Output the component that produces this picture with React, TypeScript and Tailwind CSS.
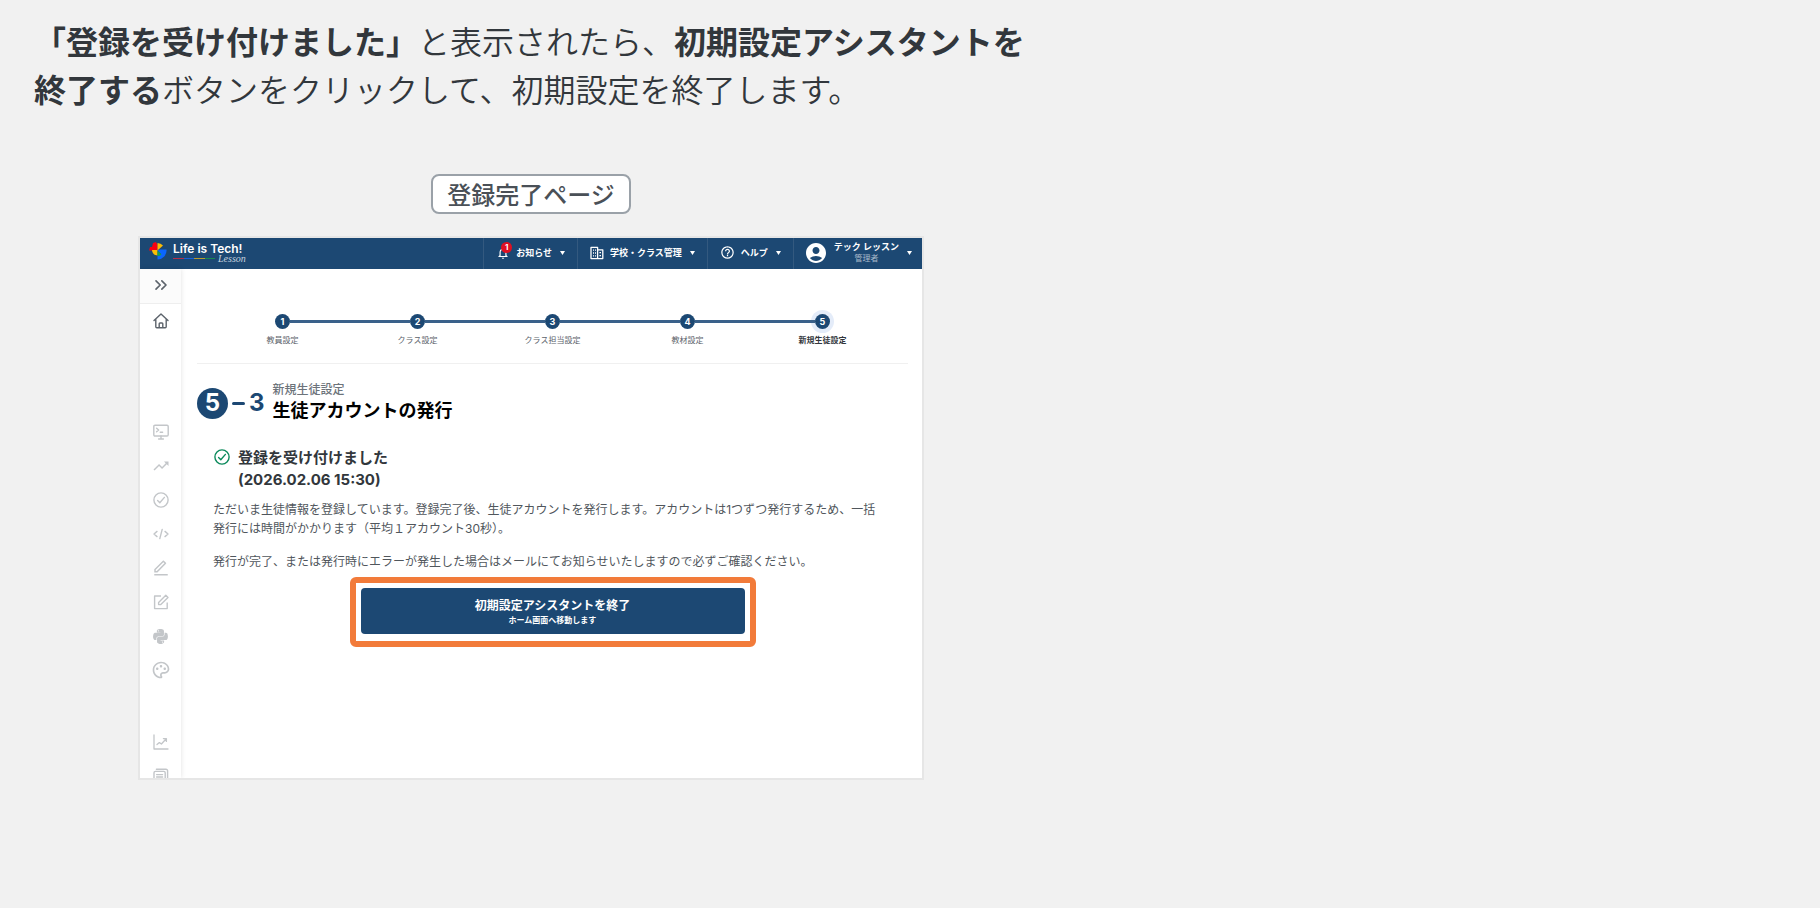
import type { ReactNode } from "react";
import { MdAccountCircle, MdHelpOutline, MdNotificationsNone, MdTrendingUp } from "react-icons/md";
import { RiEditLine, RiPaletteLine } from "react-icons/ri";
import { FaPython } from "react-icons/fa";
import { ChevronsRight } from "lucide-react";

const steps = ["教員設定", "クラス設定", "クラス担当設定", "教材設定", "新規生徒設定"];

function LogoMark() {
  return (
    <svg viewBox="0 0 36 36" className="size-[18px]" aria-hidden="true">
      <path d="M17 17H0L2 10H6L8 2L14 0L17 6Z" fill="#f80012" />
      <path d="M6 16H17V27A11 11 0 0 1 6 16Z" fill="#fbbc05" />
      <path d="M17 17V2A15 15 0 0 1 28 7Z" fill="#fbbc05" />
      <path d="M17 17L21 15H35A18 18 0 0 1 17 35V27A9 9 0 0 0 24 24Z" fill="#0a66ff" />
      <path d="M17 17L25 25A11 11 0 0 1 17 28Z" fill="#12a150" />
    </svg>
  );
}

function HomeIcon() {
  return (
    <svg viewBox="0 0 16 16" className="size-4" fill="none" stroke="currentColor" strokeWidth="1.4" strokeLinejoin="round" strokeLinecap="round">
      <path d="M1 7.6 8 1l7 6.6M2.8 6.2V13.7a1 1 0 0 0 1 1h8.4a1 1 0 0 0 1-1V6.2" />
      <path d="M6.2 14.4V10.8a.8.8 0 0 1 .8-.8h2a.8.8 0 0 1 .8.8v3.6" />
    </svg>
  );
}

function TerminalIcon() {
  return (
    <svg viewBox="0 0 16 16" className="size-4" fill="none" stroke="currentColor" strokeWidth="1.4" strokeLinejoin="round" strokeLinecap="round">
      <rect x="0.8" y="1.2" width="14.4" height="10.8" rx="1.2" />
      <path d="M3.6 4.2 5.6 6 3.6 7.8M7.2 8.2h2.4M8 12v2.8M5.6 15h4.8" />
    </svg>
  );
}

function CheckIcon() {
  return (
    <svg viewBox="0 0 16 16" className="size-4" fill="none" stroke="currentColor" strokeWidth="1.4" strokeLinejoin="round" strokeLinecap="round">
      <circle cx="8" cy="8" r="7.1" />
      <path d="M4.6 8.6 6.8 10.8 11.4 5.4" />
    </svg>
  );
}

function CodeIcon() {
  return (
    <svg viewBox="0 0 16 16" className="size-4" fill="none" stroke="currentColor" strokeWidth="1.4" strokeLinejoin="round" strokeLinecap="round">
      <path d="M4 5.4 1 8l3 2.6M12 5.4 15 8l-3 2.6M9.2 3.4 6.8 12.6" />
    </svg>
  );
}

function EditBoxIcon() {
  return (
    <svg viewBox="0 0 16 16" className="size-4" fill="none" stroke="currentColor" strokeWidth="1.4" strokeLinejoin="round">
      <path d="M8 2H1.6v12.6h12.6V8.4" />
      <path d="M5.6 10.6V8.4L12.8 1.2l2.2 2.2-7.2 7.2z" />
    </svg>
  );
}

function ChartIcon() {
  return (
    <svg viewBox="0 0 16 16" className="size-4" fill="none" stroke="currentColor" strokeWidth="1.3" strokeLinejoin="round" strokeLinecap="round">
      <path d="M1 1v14h14M4 10.6l2.4-2 2 1.4L13 5M10.4 4.6H13.4V7.4" />
    </svg>
  );
}

function PagesIcon() {
  return (
    <svg viewBox="0 0 16 16" className="size-4" fill="none" stroke="currentColor" strokeWidth="1.4" strokeLinejoin="round" strokeLinecap="round">
      <path d="M3.4 1.2H13a1.6 1.6 0 0 1 1.6 1.6v9" />
      <rect x="1" y="3.4" width="11.2" height="12" rx="1.4" />
      <path d="M3.6 6.6h6M3.6 9h6M3.6 11.4h3" />
    </svg>
  );
}

function SchoolIcon() {
  return (
    <svg viewBox="0 0 14 14" className="size-[14px]" fill="none" stroke="currentColor" strokeWidth="1.3" strokeLinejoin="round">
      <path d="M1 12.6V1.4h6.6v11.2zM7.6 3.8h5.2v8.8H7.6" />
      <path d="M3 4.2h1M5 4.2h1M3 7h1M5 7h1M3 9.8h1M5 9.8h1M9.4 6.6h1.6M9.4 9.6h1.6" />
    </svg>
  );
}

function Caret() {
  return (
    <svg viewBox="0 0 5 4" className="ml-[2px] h-1 w-[5px]" fill="currentColor" aria-hidden="true">
      <path d="M0 0h5L2.5 4z" />
    </svg>
  );
}

function NavButton({ icon, label }: { icon: ReactNode; label: string }) {
  return (
    <button type="button" className="flex items-center gap-[6px] border-l border-[#33597f] px-3 pb-[2px] text-[9px] font-bold">
      {icon}
      <span>{label}</span>
      <Caret />
    </button>
  );
}

function TopBar() {
  return (
    <header className="flex h-[31px] shrink-0 bg-[#1c4873] text-white">
      <a href="#" className="flex items-start gap-[6px] pt-1 pl-[9px]">
        <LogoMark />
        <span className="flex flex-col">
          <span className="text-[12px] leading-[13px] font-semibold">Life is Tech!</span>
          <span className="flex gap-[3px]">
            <span className="mt-[3px] flex h-px w-[42px]">
              <span className="flex-1 bg-[#b52f48]" />
              <span className="flex-1 bg-[#1760d8]" />
              <span className="flex-1 bg-[#b99a2c]" />
              <span className="flex-1 bg-[#178a52]" />
            </span>
            <span className="font-['Liberation_Serif',serif] text-[10px] leading-[7px] text-[#c5d2df] italic">Lesson</span>
          </span>
        </span>
      </a>
      <nav className="ml-auto flex">
        <NavButton
          label="お知らせ"
          icon={
            <span className="relative">
              <MdNotificationsNone className="size-[14px]" />
              <span className="absolute -top-1 left-[5px] flex size-[11px] items-center justify-center rounded-full bg-[#e01022] text-[8px] leading-none">
                1
              </span>
            </span>
          }
        />
        <NavButton label="学校・クラス管理" icon={<SchoolIcon />} />
        <NavButton label="ヘルプ" icon={<MdHelpOutline className="size-[15px]" />} />
        <button type="button" className="flex items-center gap-[6px] border-l border-[#33597f] px-[10px] pb-[2px]">
          <MdAccountCircle className="size-6" />
          <span className="flex flex-col items-center">
            <span className="text-[9px] leading-[12px] font-bold">テック レッスン</span>
            <span className="text-[8px] leading-[11px] text-[#a9b9ca]">管理者</span>
          </span>
          <Caret />
        </button>
      </nav>
    </header>
  );
}

function SideBar() {
  return (
    <aside className="flex w-[41px] shrink-0 flex-col items-center overflow-hidden text-[#c3c6c9] shadow-[0_0_5px_rgba(0,0,0,0.12)]">
      <button
        type="button"
        aria-label="メニューを開く"
        className="flex h-[35px] w-full shrink-0 items-center justify-center border-b border-[#eeeeee] bg-[#fbfbfb] pb-[2px] text-[#5c636b]"
      >
        <ChevronsRight className="size-5" strokeWidth={2} />
      </button>
      <a href="#" aria-label="ホーム" className="flex h-[34px] shrink-0 items-center text-[#5c636b]">
        <HomeIcon />
      </a>
      <ul className="mt-[77px] flex shrink-0 flex-col">
        {[
          <TerminalIcon />,
          <MdTrendingUp className="size-[18px]" />,
          <CheckIcon />,
          <CodeIcon />,
          <RiEditLine className="size-[18px]" />,
          <EditBoxIcon />,
          <FaPython className="size-[17px]" />,
          <RiPaletteLine className="size-5" />,
        ].map((icon, i) => (
          <li key={i} className="flex h-[34px] items-center justify-center">
            {icon}
          </li>
        ))}
      </ul>
      <ul className="mt-[38px] flex shrink-0 flex-col">
        <li className="flex h-[34px] items-center justify-center">
          <ChartIcon />
        </li>
        <li className="flex h-[34px] items-center justify-center">
          <PagesIcon />
        </li>
      </ul>
    </aside>
  );
}

function Steps() {
  return (
    <ol className="grid grid-cols-5 border-b border-[#f0f0f0] px-[18px] pb-[17px]">
      {steps.map((label, i) => {
        const current = i === steps.length - 1;
        return (
          <li key={label} className="flex flex-col items-center">
            <div className="flex w-full items-center">
              <span className={i === 0 ? "h-[3px] flex-1" : "relative h-[3px] flex-1 bg-[#3a618a]"} />
              <span
                className={
                  current
                    ? "flex size-[15px] items-center justify-center rounded-full bg-[#1c4873] text-[9px] leading-none font-bold text-white ring-4 ring-[#e4ecf9]"
                    : "flex size-[15px] items-center justify-center rounded-full bg-[#1c4873] text-[9px] leading-none font-bold text-white"
                }
              >
                {i + 1}
              </span>
              <span className={current ? "h-[3px] flex-1" : "h-[3px] flex-1 bg-[#3a618a]"} />
            </div>
            <span
              className={
                current
                  ? "mt-[5px] text-[8px] leading-[12px] font-bold text-[#32373c]"
                  : "mt-[5px] text-[8px] leading-[12px] text-[#5c636b]"
              }
            >
              {label}
            </span>
          </li>
        );
      })}
    </ol>
  );
}

function AppWindow() {
  return (
    <div className="mx-auto mt-[22px] flex aspect-[786/544] w-full max-w-[786px] flex-col overflow-hidden border-2 border-[#e6e6e6] bg-white font-['Inter','Noto_Sans_CJK_JP',sans-serif]">
      <TopBar />
      <div className="flex min-h-0 flex-1">
        <SideBar />
        <main className="min-w-0 flex-1 pt-[45px] pr-[14px] pl-4">
          <Steps />
          <div className="mt-[18px] flex items-center">
            <div className="flex items-center gap-1 text-[24px] leading-none font-bold text-[#1c4873]">
              <span className="flex size-[31px] items-center justify-center rounded-full bg-[#1c4873] text-white">5</span>
              <span className="h-[3px] w-[13px] rounded-full bg-[#1c4873]" />
              <span>3</span>
            </div>
            <h1 className="ml-2 flex flex-col">
              <span className="text-[12px] leading-[16px] font-medium text-[#6c737a]">新規生徒設定</span>
              <span className="text-[18px] leading-[26px] font-bold text-black">生徒アカウントの発行</span>
            </h1>
          </div>
          <section className="mt-[23px] pl-4">
            <div className="flex gap-2 pl-px text-[#32373c]">
              <span className="mt-[2px] text-[#0c8a5c]">
                <CheckIcon />
              </span>
              <h2 className="text-[15px] leading-[22px] font-bold">
                登録を受け付けました
                <br />
                (2026.02.06 15:30)
              </h2>
            </div>
            <p className="mt-[9px] text-[12px] leading-[19px] text-[#50565c]">
              ただいま生徒情報を登録しています。登録完了後、生徒アカウントを発行します。アカウントは1つずつ発行するため、一括
              <br />
              発行には時間がかかります（平均１アカウント30秒）。
            </p>
            <p className="mt-[14px] text-[12px] leading-[19px] text-[#50565c]">
              発行が完了、または発行時にエラーが発生した場合はメールにてお知らせいたしますので必ずご確認ください。
            </p>
          </section>
          <div className="mx-auto mt-[6px] w-full max-w-[406px] rounded-md border-[6px] border-[#f27b3a] px-[5px] pt-[5px] pb-[7px]">
            <button type="button" className="flex w-full flex-col items-center rounded bg-[#1c4873] pt-[9px] pb-2 text-white">
              <span className="text-[12px] leading-[17px] font-bold">初期設定アシスタントを終了</span>
              <span className="text-[8px] leading-[12px] font-bold">ホーム画面へ移動します</span>
            </button>
          </div>
        </main>
      </div>
    </div>
  );
}

export default function App() {
  return (
    <div className="min-h-screen bg-[#f1f1f1] font-['Noto_Sans_CJK_JP',sans-serif] text-[#32373c]" lang="ja">
      <div className="max-w-[1062px] px-[34px] pt-4 pb-32">
        <p className="text-[32px] leading-[48px] font-[350]">
          <b className="font-bold">「登録を受け付けました」</b>と表示されたら、
          <b className="font-bold">初期設定アシスタントを</b>
          <b className="font-bold">終了する</b>
          ボタンをクリックして、初期設定を終了します。
        </p>
        <div className="mt-[62px] flex justify-center">
          <span className="rounded-lg border-2 border-[#9aa1a8] bg-white px-[14px] text-[24px] leading-[36px] font-medium text-[#4a5057]">
            登録完了ページ
          </span>
        </div>
        <AppWindow />
      </div>
    </div>
  );
}
